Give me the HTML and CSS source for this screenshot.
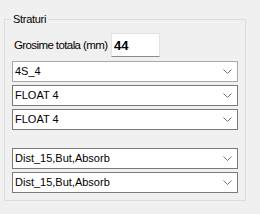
FILE: index.html
```html
<!DOCTYPE html>
<html lang="ro">
  <head>
    <meta charset="UTF-8" />
    <title>Straturi</title>
    <link rel="stylesheet" href="styles.css">
  </head>
  <body>
    <fieldset class="group">
      <legend>Straturi</legend>

      <!-- grosime -->
      <div class="row">
        <label class="label">Grosime totala (mm)</label>
        <input class="thick" type="text" value="44" />
      </div>

      <!-- straturi -->
      <div class="combos">
        <div class="combo light"><span>4S_4</span><svg viewBox="0 0 9 5"><polyline points="0.5,0.5 4.5,4.5 8.5,0.5" /></svg></div>
        <div class="combo"><span>FLOAT 4</span><svg viewBox="0 0 9 5"><polyline points="0.5,0.5 4.5,4.5 8.5,0.5" /></svg></div>
        <div class="combo"><span>FLOAT 4</span><svg viewBox="0 0 9 5"><polyline points="0.5,0.5 4.5,4.5 8.5,0.5" /></svg></div>
      </div>

      <div class="combos second">
        <div class="combo"><span>Dist_15,But,Absorb</span><svg viewBox="0 0 9 5"><polyline points="0.5,0.5 4.5,4.5 8.5,0.5" /></svg></div>
        <div class="combo"><span>Dist_15,But,Absorb</span><svg viewBox="0 0 9 5"><polyline points="0.5,0.5 4.5,4.5 8.5,0.5" /></svg></div>
      </div>
    </fieldset>
  </body>
</html>
```

FILE: styles.css
```css
* {
  margin: 0;
  padding: 0;
  box-sizing: border-box;
}
body {
  width: 260px;
  height: 214px;
  background: #f0f0f0;
  color: #000;
  font: 11px/13px 'Liberation Sans', Arial, sans-serif;
  overflow: hidden;
}

/* groupbox */
.group {
  margin: 13px 0 0 4px;
  width: 241px;
  height: 188px;
  padding: 0 7px;
  border: 1px solid #dcdcdc;
}
.group legend {
  margin-left: -1px;
  padding: 0 2px;
  letter-spacing: -0.3px;
}

.row {
  margin-top: 7px;
  height: 24px;
  display: flex;
  align-items: center;
}
.label {
  width: 99px;
  padding-left: 2px;
  font-size: 11.5px;
  letter-spacing: -0.6px;
}
.thick {
  width: 49px;
  height: 24px;
  padding: 0 2px;
  border: 1px solid #e3e3e3;
  border-bottom-color: #8a8a8a;
  background: #fff;
  font: bold 13px 'Liberation Sans', Arial, sans-serif;
  color: #000;
}

.combos {
  margin-top: 4px;
  display: flex;
  flex-direction: column;
  gap: 3px;
}
.combos.second {
  margin-top: 18px;
}
.combo {
  width: 226px;
  height: 21px;
  padding: 0 5px 0 2px;
  background: #fff;
  border: 1px solid #7a7a7a;

  display: flex;
  justify-content: space-between;
  align-items: center;
}
.combo.light {
  border-color: #a8a8a8;
}
.combo svg {
  width: 9px;
  height: 5px;
  fill: none;
  stroke: #6e6e6e;
  stroke-width: 1;
}
```
